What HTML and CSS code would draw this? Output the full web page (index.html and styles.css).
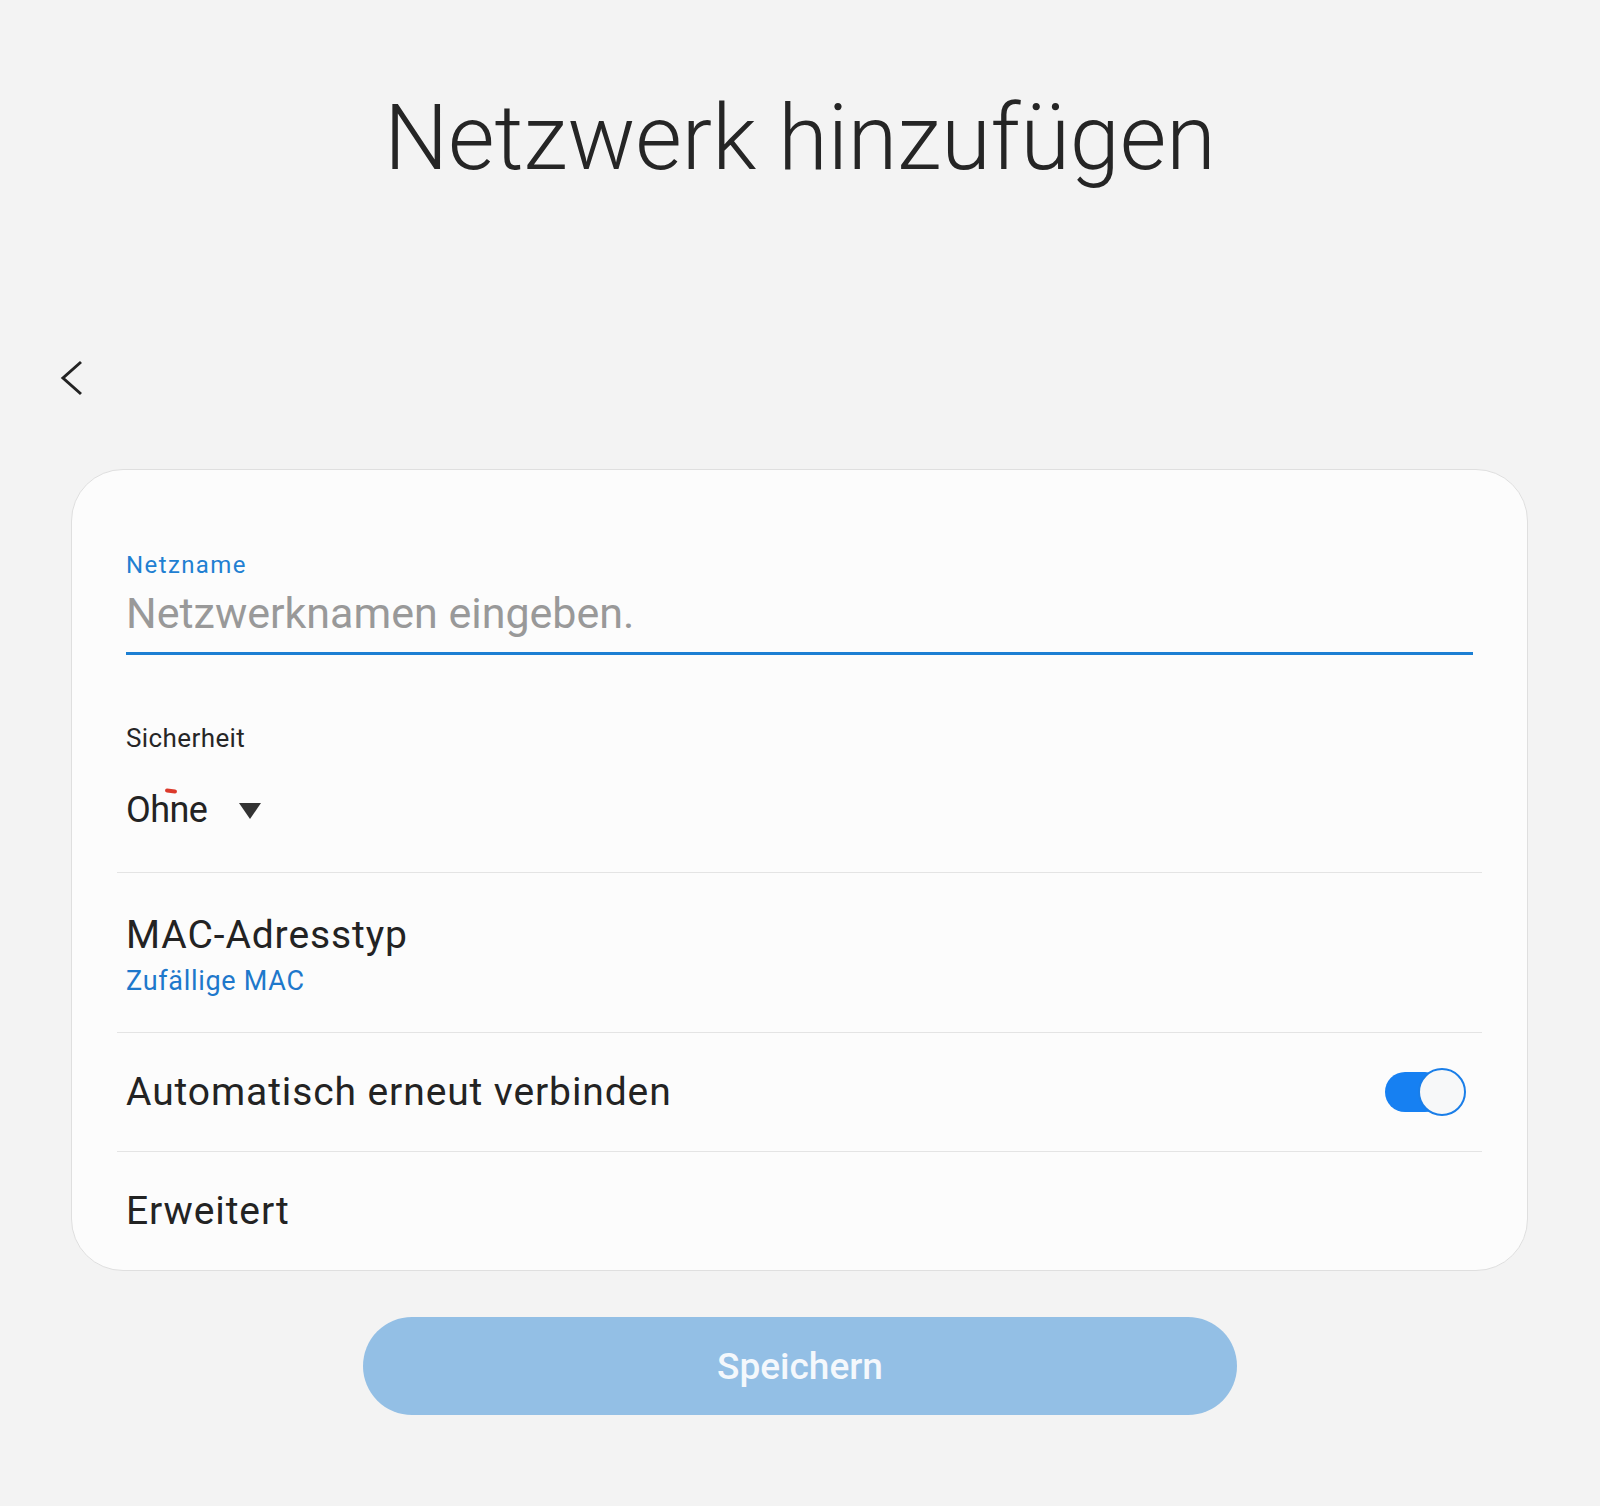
FILE: index.html
```html
<!DOCTYPE html>
<html lang="de">
<head>
    <meta charset="UTF-8" />
    <meta name="viewport" content="width=device-width, initial-scale=1.0" />
    <title>Netzwerk hinzufügen</title>
    <link rel="stylesheet" href="styles.css">
</head>
<body>
    <header class="page-header">
        <h1>Netzwerk hinzufügen</h1>
    </header>
    <div class="toolbar">
        <button class="back-button" aria-label="Zurück">
            <svg width="40" height="40" viewBox="0 0 40 40">
                <polyline points="29,4 11,20 29,36" fill="none" stroke="#232323" stroke-width="3" />
            </svg>
        </button>
    </div>
    <main class="card">
        <section class="field-group">
            <label class="field-label" for="ssid">Netzname</label>
            <div class="field-input" id="ssid">Netzwerknamen eingeben.</div>
            <div class="security-label">Sicherheit</div>
            <div class="security-select">
                <span class="security-value">Ohne<span class="mark"></span></span>
                <span class="caret"></span>
            </div>
        </section>
        <section class="row row-mac">
            <div class="row-title">MAC-Adresstyp</div>
            <div class="row-sub">Zufällige MAC</div>
        </section>
        <section class="row row-switch">
            <div class="row-title">Automatisch erneut verbinden</div>
            <span class="switch"></span>
        </section>
        <section class="row row-switch">
            <div class="row-title">Erweitert</div>
        </section>
    </main>
    <div class="actions">
        <button class="save-button">Speichern</button>
    </div>
</body>
</html>
```

FILE: styles.css
```css
body {
    margin: 0;
    font-family: 'Roboto', 'Liberation Sans', sans-serif;
    background-color: #f3f3f3;
    color: #222;
}
.page-header {
    padding-top: 94px;
    text-align: center;
}
.page-header h1 {
    margin: 0;
    font-size: 90px;
    line-height: 1;
    font-weight: 300;
    color: #252525;
}
.toolbar {
    margin-top: 174px;
    padding-left: 52px;
    height: 40px;
}
.back-button {
    border: none;
    background: none;
    padding: 0;
    width: 40px;
    height: 40px;
    cursor: pointer;
}
.back-button svg {
    display: block;
}

.card {
    display: block;
    margin: 71px 72px 0 71px;
    padding: 0 45px;
    background-color: #fcfcfc;
    border: 1px solid #dfdfdf;
    border-radius: 52px;
}
.field-group {
    padding: 79px 9px 40px;
}
.field-label {
    display: block;
    font-size: 24px;
    line-height: 32px;
    letter-spacing: 1.4px;
    color: #1f80d2;
}
.field-input {
    margin-top: 4px;
    font-size: 43px;
    line-height: 56px;
    color: #999;
    padding-bottom: 11px;
    border-bottom: 3px solid #1c7fd3;
}
.security-label {
    margin-top: 67px;
    font-size: 26px;
    line-height: 32px;
    letter-spacing: 0.4px;
    color: #262626;
}
.security-select {
    margin-top: 34px;
    display: flex;
    align-items: center;
    gap: 32px;
}
.security-value {
    position: relative;
    font-size: 36px;
    line-height: 44px;
    letter-spacing: -0.6px;
    color: #232323;
}
.security-value .mark {
    position: absolute;
    left: 39px;
    top: 1px;
    width: 12px;
    height: 4px;
    border-radius: 3px;
    background-color: #dc3a2c;
    transform: rotate(6deg);
}
.caret {
    width: 0;
    height: 0;
    border-left: 11.5px solid transparent;
    border-right: 11.5px solid transparent;
    border-top: 16px solid #333;
    margin-top: 2px;
}

.row {
    border-top: 1px solid #e4e4e4;
    padding: 0 16px 0 9px;
}
.row-title {
    font-size: 39px;
    line-height: 52px;
    letter-spacing: 0.9px;
    color: #232323;
}
.row-mac {
    padding-top: 36px;
    height: 123px;
}
.row-sub {
    margin-top: 4px;
    font-size: 27px;
    line-height: 32px;
    letter-spacing: 0.7px;
    color: #1e78cb;
}
.row-switch {
    height: 118px;
    display: flex;
    align-items: center;
    justify-content: space-between;
}
.switch {
    position: relative;
    width: 81px;
    height: 49px;
}
.switch::before {
    content: '';
    position: absolute;
    left: 0;
    top: 4px;
    width: 60px;
    height: 40px;
    border-radius: 20px;
    background-color: #1680f2;
}
.switch::after {
    content: '';
    position: absolute;
    right: 0;
    top: 0;
    width: 44px;
    height: 44px;
    border-radius: 50%;
    border: 2.5px solid #1a7ee8;
    background-color: #f7f8f9;
}

.actions {
    display: flex;
    justify-content: center;
    margin-top: 46px;
}
.save-button {
    width: 874px;
    height: 98px;
    border: none;
    border-radius: 49px;
    background-color: #93bfe5;
    color: #f4f8fc;
    font-family: 'Roboto', 'Liberation Sans', sans-serif;
    font-size: 37px;
    font-weight: 500;
    cursor: pointer;
}
```
